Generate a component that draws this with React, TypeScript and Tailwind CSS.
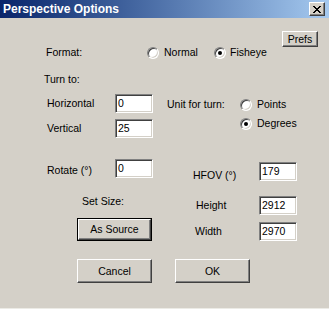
import React from 'react';

const Radio: React.FC<{ checked?: boolean }> = ({ checked }) => (
  <div className="w-[12px] h-[12px] shrink-0 rounded-full bg-white border border-t-[#808080] border-l-[#808080] border-r-white border-b-white shadow-[inset_1px_1px_0_#404040,inset_-1px_-1px_0_#d4d0c8] flex items-center justify-center">
    {checked && <div className="w-[4px] h-[4px] rounded-full bg-black" />}
  </div>
);

const Field: React.FC<{ value: string }> = ({ value }) => (
  <div className="w-[38px] h-[19px] shrink-0 bg-white border border-t-[#808080] border-l-[#808080] border-r-white border-b-white shadow-[inset_1px_1px_0_#404040,inset_-1px_-1px_0_#d4d0c8] pl-[2px] flex items-center leading-none">
    {value}
  </div>
);

const Btn: React.FC<{ label: string; className?: string }> = ({ label, className }) => (
  <div
    className={
      'bg-[#d4d0c8] border border-t-white border-l-white border-r-[#404040] border-b-[#404040] shadow-[inset_-1px_-1px_0_#808080] flex items-center justify-center leading-none ' +
      (className ?? '')
    }
  >
    {label}
  </div>
);

export default function App() {
  return (
    <div className="w-[329px] h-[309px] bg-[#d4d0c8] flex flex-col font-['Liberation_Sans',Arial,sans-serif] text-[10.5px] text-black border-b border-[#ecebe6]">
      {/* title bar */}
      <div className="h-[18px] flex items-center justify-between pl-[3px] pr-[4px] bg-gradient-to-r from-[#0a246a] to-[#a6caf0]">
        <span className="text-white font-bold text-[12px] leading-none">Perspective Options</span>
        <div className="w-[16px] h-[14px] bg-[#d4d0c8] border border-t-white border-l-white border-r-[#404040] border-b-[#404040] shadow-[inset_-1px_-1px_0_#808080] flex items-center justify-center">
          <svg width="8" height="7" viewBox="0 0 8 7">
            <path d="M0 0 L7 7 M1 0 L8 7 M7 0 L0 7 M8 0 L1 7" stroke="#000" strokeWidth="1" />
          </svg>
        </div>
      </div>

      <div className="flex justify-end pr-[11px] mt-[13px]">
        <Btn label="Prefs" className="w-[36px] h-[16px]" />
      </div>

      <div className="flex items-center h-[12px] pl-[46px]">
        <span className="w-[101px]">Format:</span>
        <Radio />
        <span className="ml-[5px] w-[50px]">Normal</span>
        <Radio checked />
        <span className="ml-[4px]">Fisheye</span>
      </div>

      <div className="pl-[44px] mt-[15px] h-[12px] flex items-center">Turn to:</div>

      <div className="flex mt-[8px]">
        <div className="flex flex-col pl-[47px] w-[153px]">
          <div className="flex items-center h-[19px]">
            <span className="w-[68px] pt-[1px]">Horizontal</span>
            <Field value="0" />
          </div>
          <div className="flex items-center h-[19px] mt-[6px]">
            <span className="w-[68px]">Vertical</span>
            <Field value="25" />
          </div>
        </div>
        <div className="flex flex-col pl-[14px]">
          <div className="flex items-center h-[19px] mt-[1px]">
            <span className="w-[73px]">Unit for turn:</span>
            <Radio />
            <span className="ml-[5px]">Points</span>
          </div>
          <div className="flex items-center h-[12px] mt-[4px] pl-[73px]">
            <Radio checked />
            <span className="ml-[5px]">Degrees</span>
          </div>
        </div>
      </div>

      <div className="flex mt-[21px]">
        <div className="flex flex-col pl-[47px] w-[153px]">
          <div className="flex items-center h-[19px]">
            <span className="w-[68px] pt-[4px]">Rotate (°)</span>
            <Field value="0" />
          </div>
          <div className="h-[12px] mt-[18px] ml-[35px] flex items-center">Set Size:</div>
          <div className="mt-[10px] ml-[30px] w-[75px] h-[23px] border border-black">
            <Btn label="As Source" className="w-full h-full" />
          </div>
        </div>
        <div className="flex flex-col pl-[40px]">
          <div className="flex items-center h-[19px] mt-[3px]">
            <span className="w-[66px] pt-[8px]">HFOV (°)</span>
            <Field value="179" />
          </div>
          <div className="flex items-center h-[19px] mt-[15px]">
            <span className="w-[66px] pl-[3px]">Height</span>
            <Field value="2912" />
          </div>
          <div className="flex items-center h-[19px] mt-[7px]">
            <span className="w-[66px] pl-[2px]">Width</span>
            <Field value="2970" />
          </div>
        </div>
      </div>

      <div className="flex mt-[18px] pl-[77px]">
        <Btn label="Cancel" className="w-[75px] h-[24px]" />
        <Btn label="OK" className="w-[75px] h-[24px] ml-[23px]" />
      </div>
    </div>
  );
}
